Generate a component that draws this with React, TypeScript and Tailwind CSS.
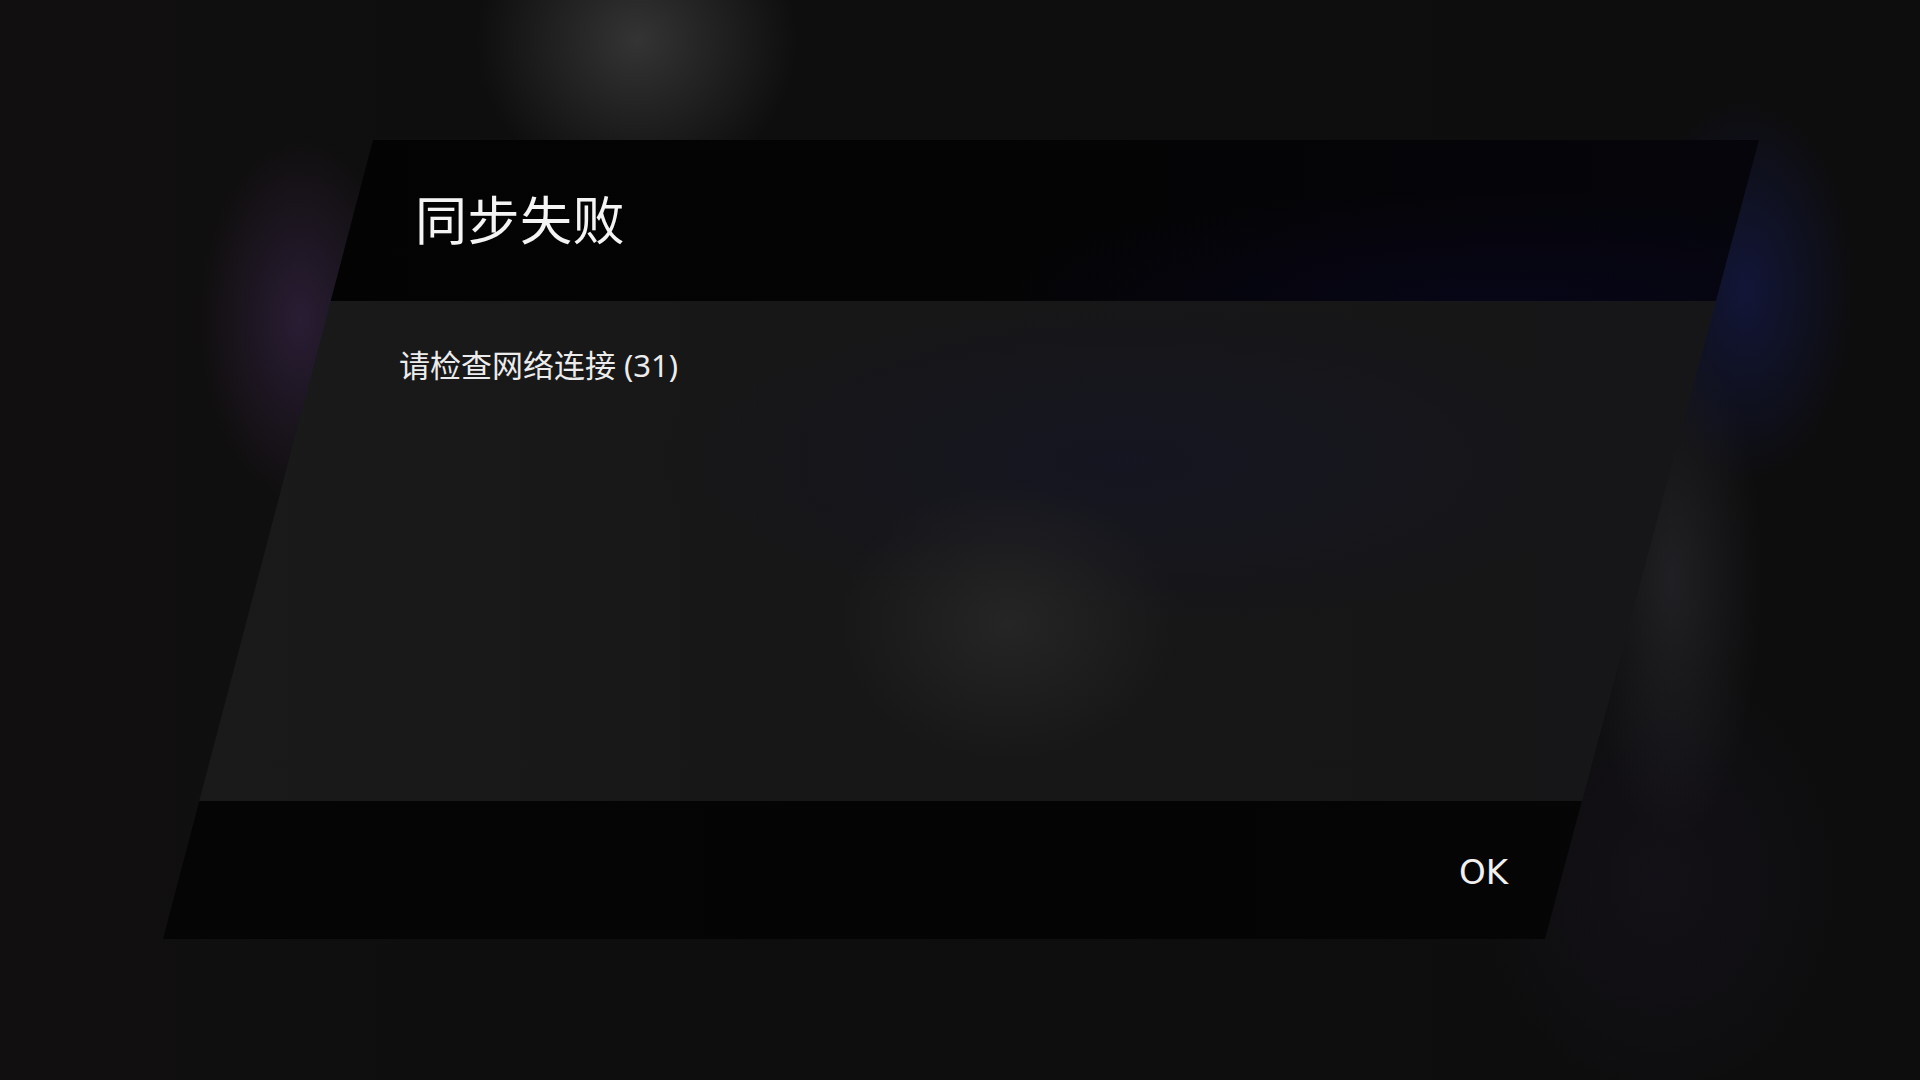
import React from 'react';

const App: React.FC = () => {
  return (
    <div className="w-full h-[1080px] overflow-hidden bg-[radial-gradient(ellipse_160px_150px_at_637px_40px,#343434_0%,rgba(52,52,52,0)_100%),radial-gradient(ellipse_100px_180px_at_300px_320px,rgba(62,40,82,0.55)_0%,rgba(62,40,82,0)_100%),radial-gradient(ellipse_110px_190px_at_1745px_290px,rgba(22,28,90,0.55)_0%,rgba(22,28,90,0)_100%),radial-gradient(ellipse_90px_260px_at_1672px_580px,rgba(48,48,54,0.55)_0%,rgba(48,48,54,0)_100%),radial-gradient(ellipse_180px_220px_at_1660px_880px,rgba(28,20,34,0.45)_0%,rgba(28,20,34,0)_100%),linear-gradient(90deg,#110f0f_0%,#0e0e0e_40%,#0d0d0e_100%)] font-['Noto_Sans','Noto_Sans_CJK_SC',sans-serif] text-white">
      <div className="pt-[140px] pl-[163px]">
        <div className="w-[1596px] h-[799px] flex flex-col [clip-path:polygon(210px_0,100%_0,1382px_100%,0_100%)]">
          {/* header */}
          <div className="h-[161px] flex items-center pl-[252px] pb-[6px] bg-[radial-gradient(ellipse_520px_110px_at_1330px_160px,rgba(8,6,32,0.6)_0%,rgba(8,6,32,0)_100%),linear-gradient(90deg,#030303_0%,#040404_50%,#05050b_100%)]">
            <h1 className="text-[52px] leading-none font-normal tracking-[0.5px] font-['Noto_Sans_CJK_SC',sans-serif] text-[#f4f4f4]">同步失败</h1>
          </div>
          {/* body */}
          <div className="flex-1 pt-[43px] pl-[236px] bg-[radial-gradient(ellipse_170px_140px_at_845px_322px,#252525_0%,rgba(37,37,37,0)_100%),radial-gradient(ellipse_480px_170px_at_960px_160px,rgba(20,20,40,0.6)_0%,rgba(20,20,40,0)_100%),linear-gradient(90deg,#1a1a1b_0%,#171717_40%,#161618_100%)]">
            <p className="text-[31px] leading-[42px] text-[#ececec]">请检查网络连接 (31)</p>
          </div>
          {/* footer */}
          <div className="h-[138px] flex items-center justify-end pr-[251px] pt-[4px] bg-[linear-gradient(90deg,#050505_0%,#040404_60%,#060606_100%)]">
            <button className="text-[34px] leading-none font-['DejaVu_Sans',sans-serif] text-[#f0f0f0]">OK</button>
          </div>
        </div>
      </div>
    </div>
  );
};

export default App;
